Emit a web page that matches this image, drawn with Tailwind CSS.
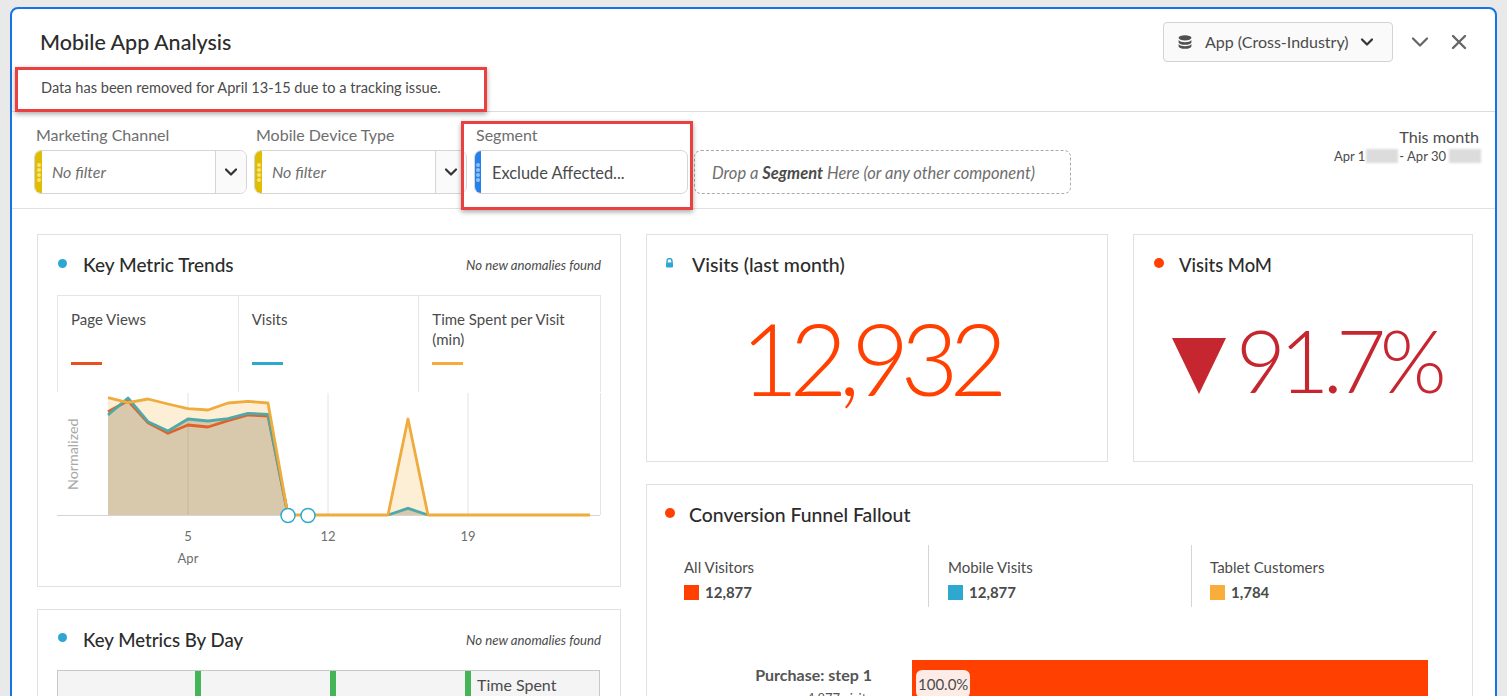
<!DOCTYPE html>
<html lang="en">
<head>
  <meta charset="UTF-8">
  <title>Mobile App Analysis</title>
  <script src="https://cdn.jsdelivr.net/npm/@tailwindcss/browser@4"></script>
</head>
<body class="h-[696px] w-[1507px] overflow-hidden bg-[#e9e9e9] pt-[7px] pl-[10px] font-[family-name:Lato,sans-serif] text-[#4b4b4b]">
  <div class="relative h-[720px] w-[1487px] rounded-t-[8px] border-2 border-[#1473e6] bg-white">

    <!-- header -->
    <div class="flex h-[103px] items-start justify-between border-b border-[#dcdcdc] pl-[28px] pr-[28px]">
      <div>
        <h1 class="mt-[18px] text-[21.500px] leading-[30px] font-medium text-[#2c2c2c]">Mobile App Analysis</h1>
        <p class="mt-[21px] ml-[1px] text-[14.600px] leading-[20px] text-[#4b4b4b]">Data has been removed for April 13-15 due to a tracking issue.</p>
      </div>
      <div class="mt-[13px] flex items-center">
        <button class="flex h-[40px] w-[230px] items-center rounded-[4px] border border-[#d3d3d3] bg-[#fafafa] pl-[14px] text-[16px] text-[#4b4b4b]">
          <svg class="h-[14px] w-[14px]" viewBox="0 0 14 14" fill="#505050"><ellipse cx="7" cy="2.8" rx="6.4" ry="2.6"/><path d="M.6 5c1 1.500 3.500 2.200 6.400 2.200S12.400 6.500 13.400 5v2.200C13.400 8.700 10.500 9.800 7 9.800S.6 8.700.6 7.200z"/><path d="M.6 9c1 1.500 3.500 2.200 6.400 2.200s5.400-.7 6.400-2.200v2.200c0 1.500-2.900 2.600-6.400 2.600S.6 12.700.6 11.200z"/></svg>
          <span class="ml-[13px]">App (Cross-Industry)</span>
          <svg class="ml-[11px] h-[10px] w-[14px]" viewBox="0 0 14 10" fill="none" stroke="#333" stroke-width="2.200" stroke-linecap="round" stroke-linejoin="round"><path d="M2 2.500 7 7.500 12 2.500"/></svg>
        </button>
        <svg class="ml-[18px] h-[12px] w-[18px]" viewBox="0 0 18 12" fill="none" stroke="#666" stroke-width="2.200" stroke-linecap="round" stroke-linejoin="round"><path d="M2 2.500 9 9.500 16 2.500"/></svg>
        <svg class="ml-[22px] h-[16px] w-[16px]" viewBox="0 0 16 16" fill="none" stroke="#666" stroke-width="2.400" stroke-linecap="round"><path d="M2 2 14 14M14 2 2 14"/></svg>
      </div>
    </div>

    <!-- filters -->
    <div class="flex h-[97px] border-b border-[#e1e1e1] pl-[22px]">
      <div class="w-[213px] pt-[11px]">
        <div class="pl-[2px] text-[16px] leading-[24px] text-[#6e6e6e]">Marketing Channel</div>
        <div class="mt-[3px] flex h-[44px] items-stretch overflow-hidden rounded-[7px] border border-[#d5d5d5]">
          <div class="flex w-[7px] flex-col items-center justify-center gap-[1px] bg-[#e0bd00]">
            <i class="h-[4px] w-[4px] rounded-full bg-[#f6e37a]"></i><i class="h-[4px] w-[4px] rounded-full bg-[#f6e37a]"></i><i class="h-[4px] w-[4px] rounded-full bg-[#f6e37a]"></i><i class="h-[4px] w-[4px] rounded-full bg-[#f6e37a]"></i>
          </div>
          <div class="flex flex-1 items-center pl-[10px] text-[16px] text-[#6e6e6e] italic">No filter</div>
          <div class="flex w-[31px] items-center justify-center border-l border-[#d5d5d5] bg-[#fafafa]">
            <svg class="h-[10px] w-[14px]" viewBox="0 0 14 10" fill="none" stroke="#333" stroke-width="2.200" stroke-linecap="round" stroke-linejoin="round"><path d="M2 2.500 7 7.500 12 2.500"/></svg>
          </div>
        </div>
      </div>
      <div class="ml-[7px] w-[213px] pt-[11px]">
        <div class="pl-[2px] text-[16px] leading-[24px] text-[#6e6e6e]">Mobile Device Type</div>
        <div class="mt-[3px] flex h-[44px] items-stretch overflow-hidden rounded-[7px] border border-[#d5d5d5]">
          <div class="flex w-[7px] flex-col items-center justify-center gap-[1px] bg-[#e0bd00]">
            <i class="h-[4px] w-[4px] rounded-full bg-[#f6e37a]"></i><i class="h-[4px] w-[4px] rounded-full bg-[#f6e37a]"></i><i class="h-[4px] w-[4px] rounded-full bg-[#f6e37a]"></i><i class="h-[4px] w-[4px] rounded-full bg-[#f6e37a]"></i>
          </div>
          <div class="flex flex-1 items-center pl-[10px] text-[16px] text-[#6e6e6e] italic">No filter</div>
          <div class="flex w-[31px] items-center justify-center border-l border-[#d5d5d5] bg-[#fafafa]">
            <svg class="h-[10px] w-[14px]" viewBox="0 0 14 10" fill="none" stroke="#333" stroke-width="2.200" stroke-linecap="round" stroke-linejoin="round"><path d="M2 2.500 7 7.500 12 2.500"/></svg>
          </div>
        </div>
      </div>
      <div class="ml-[7px] w-[214px] pt-[11px]">
        <div class="pl-[2px] text-[16px] leading-[24px] text-[#6e6e6e]">Segment</div>
        <div class="mt-[3px] flex h-[44px] items-stretch overflow-hidden rounded-[7px] border border-[#d5d5d5]">
          <div class="flex w-[6px] flex-col items-center justify-center gap-[1px] bg-[#2680eb]">
            <i class="h-[4px] w-[4px] rounded-full bg-[#8fc0f7]"></i><i class="h-[4px] w-[4px] rounded-full bg-[#8fc0f7]"></i><i class="h-[4px] w-[4px] rounded-full bg-[#8fc0f7]"></i><i class="h-[4px] w-[4px] rounded-full bg-[#8fc0f7]"></i>
          </div>
          <div class="flex flex-1 items-center pl-[11px] pt-[2px] text-[16.400px] text-[#4b4b4b]">Exclude Affected...</div>
        </div>
      </div>
      <div class="ml-[6px] mt-[38px] flex h-[44px] w-[377px] items-center rounded-[7px] border border-dashed border-[#aaa] pl-[17px] pt-[2px] text-[16.500px] text-[#6e6e6e] italic">
        <span>Drop a <b class="font-bold text-[#4b4b4b]">Segment</b> Here (or any other component)</span>
      </div>
      <div class="ml-auto mr-[16px] pt-[15px] text-right">
        <div class="text-[16.200px] leading-[20px] text-[#4b4b4b]">This month</div>
        <div class="flex items-center justify-end text-[13px] leading-[18px] text-[#4b4b4b]">
          <span>Apr 1</span><i class="mx-[1px] h-[14px] w-[32px] bg-[#dcdcdc] blur-[1px]"></i><span>- Apr 30</span><i class="ml-[3px] mr-[-2px] h-[14px] w-[32px] bg-[#dcdcdc] blur-[1px]"></i>
        </div>
      </div>
    </div>

    <!-- dashboard -->
    <div class="flex gap-[25px] pt-[25px] pl-[25px]">
      <div class="flex w-[584px] flex-col gap-[22px]">
        <section class="h-[353px] border border-[#e1e1e1] px-[19px]">
          <div class="flex h-[60px] items-center justify-between">
            <div class="flex items-center">
              <i class="mt-[-4px] ml-[1px] h-[9px] w-[9px] rounded-full bg-[#2da6d2]"></i>
              <h2 class="ml-[16px] text-[19px] font-medium text-[#2c2c2c]">Key Metric Trends</h2>
            </div>
            <span class="pt-[2px] text-[13.200px] text-[#4b4b4b] italic">No new anomalies found</span>
          </div>
          <div class="grid h-[97px] w-[544px] grid-cols-3 border-x border-t border-[#e6e6e6]">
            <div class="border-r border-[#e6e6e6] pt-[13px] pl-[13px]">
              <div class="h-[40px] text-[15px] leading-[20px] text-[#4b4b4b]">Page Views</div>
              <i class="mt-[13px] block h-[3px] w-[31px] bg-[#e8501f]"></i>
            </div>
            <div class="border-r border-[#e6e6e6] pt-[13px] pl-[13px]">
              <div class="h-[40px] text-[15px] leading-[20px] text-[#4b4b4b]">Visits</div>
              <i class="mt-[13px] block h-[3px] w-[31px] bg-[#2fa8d0]"></i>
            </div>
            <div class="pt-[13px] pl-[13px]">
              <div class="h-[40px] text-[15px] leading-[20px] text-[#4b4b4b]">Time Spent per Visit (min)</div>
              <i class="mt-[13px] block h-[3px] w-[31px] bg-[#f5ab3c]"></i>
            </div>
          </div>
          <svg class="block h-[178px] w-[544px]" viewBox="57 392 544 178" font-family="Lato, sans-serif">
            <path d="M188 393V515M328 393V515M468 393V515M600.500 393V515" stroke="#e4e4e4" fill="none"/>
            <path d="M57 515.500H600" stroke="#d5d5d5" fill="none"/>
            <path d="M108 397.700 128 402.700 148 399 168 404 188 408.700 208 410 228 403 248 401.300 268 403 288 515H108Z" fill="#fdeed6"/>
            <path d="M388 515 408 419 428 515Z" fill="#fdeed6"/>
            <path d="M108 415 128 398 148 421.700 168 431 188 419 208 421 228 418.700 248 413.300 268 414.300 288 515H108Z" fill="#c8b99b" fill-opacity=".7"/>
            <path d="M388 515 408 508.300 428 515Z" fill="#c8b99b" fill-opacity=".7"/>
            <path d="M188 419V515" stroke="#c5b698"/>
            <path d="M108 411.700 128 400.700 148 422.700 168 433.300 188 425 208 427 228 420.700 248 415 268 416 288 515" fill="none" stroke="#e0622b" stroke-width="2.800" stroke-linejoin="round"/>
            <path d="M108 415 128 398 148 421.700 168 431 188 419 208 421 228 418.700 248 413.300 268 414.300 288 515" fill="none" stroke="#4fa9a8" stroke-width="2.800" stroke-linejoin="round"/>
            <path d="M388 515 408 508.300 428 515" fill="none" stroke="#4fa9a8" stroke-width="2.800"/>
            <path d="M108 397.700 128 402.700 148 399 168 404 188 408.700 208 410 228 403 248 401.300 268 403 288 515H388L408 419 428 515H590" fill="none" stroke="#efab3c" stroke-width="2.800" stroke-linejoin="round"/>
            <circle cx="288" cy="515.500" r="7" fill="#fff" stroke="#2fa8d0" stroke-width="1.500"/>
            <circle cx="308" cy="515.500" r="7" fill="#fff" stroke="#2fa8d0" stroke-width="1.500"/>
            <text transform="translate(78 490) rotate(-90)" font-size="14.300" fill="#a8a8a8">Normalized</text>
            <g font-size="13" fill="#6e6e6e" text-anchor="middle">
              <text x="188" y="541">5</text>
              <text x="328" y="541">12</text>
              <text x="468" y="541">19</text>
              <text x="188" y="563">Apr</text>
            </g>
          </svg>
        </section>

        <section class="h-[200px] border border-[#e1e1e1] px-[19px]">
          <div class="flex h-[60px] items-center justify-between">
            <div class="flex items-center">
              <i class="mt-[-4px] ml-[1px] h-[9px] w-[9px] rounded-full bg-[#2da6d2]"></i>
              <h2 class="ml-[16px] pt-[2px] text-[18.600px] font-medium text-[#2c2c2c]">Key Metrics By Day</h2>
            </div>
            <span class="pt-[2px] text-[13.200px] text-[#4b4b4b] italic">No new anomalies found</span>
          </div>
          <div class="flex h-[60px] w-[543px] border border-[#c8c8c8] bg-[#f4f4f4]">
            <div class="w-[137px]"></div>
            <div class="w-[135px] border-l-[6px] border-[#44b556]"></div>
            <div class="w-[135px] border-l-[6px] border-[#44b556]"></div>
            <div class="flex-1 border-l-[6px] border-[#44b556] pl-[6px] pt-[2px] text-[16px] text-[#4b4b4b]">Time Spent</div>
          </div>
        </section>
      </div>

      <div class="flex w-[827px] flex-col gap-[22px]">
        <div class="flex gap-[25px]">
          <section class="h-[228px] w-[462px] border border-[#e1e1e1] pl-[18px]">
            <div class="flex h-[60px] items-center">
              <svg class="mt-[-4px] h-[10px] w-[9px]" viewBox="0 0 9 10"><path d="M2 5V3a2.500 2.500 0 0 1 5 0v2" fill="none" stroke="#2da6d2" stroke-width="1.400"/><rect x="1" y="4.500" width="7" height="5" rx="1" fill="#2da6d2"/></svg>
              <h2 class="ml-[18px] text-[19.500px] font-medium text-[#2c2c2c]">Visits (last month)</h2>
            </div>
            <div class="mt-[2px] ml-[-33px] text-center text-[100px] leading-[120px] font-light tracking-[-9px] text-[#ff4000]">12,932</div>
          </section>
          <section class="h-[228px] w-[340px] border border-[#e1e1e1] pl-[20px]">
            <div class="flex h-[60px] items-center">
              <i class="mt-[-4px] h-[10px] w-[10px] rounded-full bg-[#ff4000]"></i>
              <h2 class="ml-[15px] pt-[2px] text-[18.400px] font-medium text-[#2c2c2c]">Visits MoM</h2>
            </div>
            <div class="mt-[10px] ml-[18px] flex items-center">
              <svg class="mt-[12px] h-[56px] w-[54px] shrink-0" viewBox="0 0 54 56"><path d="M0 0H54L27 56Z" fill="#c5262f"/></svg>
              <span class="ml-[10px] text-[86px] leading-[110px] font-light tracking-[-6.500px] text-[#c5262f]">91.7%</span>
            </div>
          </section>
        </div>

        <section class="h-[240px] border border-[#e1e1e1] pl-[18px]">
          <div class="flex h-[60px] items-center">
            <i class="mt-[-4px] h-[10px] w-[10px] rounded-full bg-[#ff4000]"></i>
            <h2 class="ml-[14px] text-[19.400px] font-medium text-[#2c2c2c]">Conversion Funnel Fallout</h2>
          </div>
          <div class="flex h-[62px] pl-[19px]">
            <div class="w-[244px] pt-[12px]">
              <div class="text-[15px] leading-[20px] text-[#4b4b4b]">All Visitors</div>
              <div class="mt-[3px] flex items-center text-[15px] leading-[24px] font-bold text-[#4b4b4b]"><i class="mr-[6px] h-[15px] w-[15px] bg-[#ff4000]"></i>12,877</div>
            </div>
            <div class="w-[263px] border-l border-[#d5d5d5] pt-[12px] pl-[19px]">
              <div class="text-[15px] leading-[20px] text-[#4b4b4b]">Mobile Visits</div>
              <div class="mt-[3px] flex items-center text-[15px] leading-[24px] font-bold text-[#4b4b4b]"><i class="mr-[6px] h-[15px] w-[15px] bg-[#2fa8d0]"></i>12,877</div>
            </div>
            <div class="border-l border-[#d5d5d5] pt-[12px] pl-[18px]">
              <div class="text-[15px] leading-[20px] text-[#4b4b4b]">Tablet Customers</div>
              <div class="mt-[3px] flex items-center text-[15px] leading-[24px] font-bold text-[#4b4b4b]"><i class="mr-[6px] h-[15px] w-[15px] bg-[#f9ae3c]"></i>1,784</div>
            </div>
          </div>
          <div class="mt-[53px] flex">
            <div class="w-[207px] pt-[4px] text-right">
              <div class="text-[16px] leading-[22px] font-bold text-[#555]">Purchase: step 1</div>
              <div class="mt-[2px] text-[13px] leading-[20px] text-[#555]">4,877 visits</div>
            </div>
            <div class="ml-[40px] h-[60px] w-[516px] bg-[#ff4000] pt-[10px] pl-[4px]">
              <span class="inline-block h-[28px] rounded-[6px] bg-[#fdece6] px-[2px] text-[15px] leading-[28px] text-[#4b4b4b]">100.0%</span>
            </div>
          </div>
        </section>
      </div>
    </div>

    <!-- annotation boxes -->
    <div class="absolute top-[58px] left-[3px] h-[45px] w-[472px] border-[3px] border-[#ea4040] shadow-[0_2px_5px_rgba(0,0,0,0.35)]"></div>
    <div class="absolute top-[112px] left-[449px] h-[89px] w-[232px] border-[3px] border-[#ea4040] shadow-[0_2px_5px_rgba(0,0,0,0.35)]"></div>
  </div>
</body>
</html>
